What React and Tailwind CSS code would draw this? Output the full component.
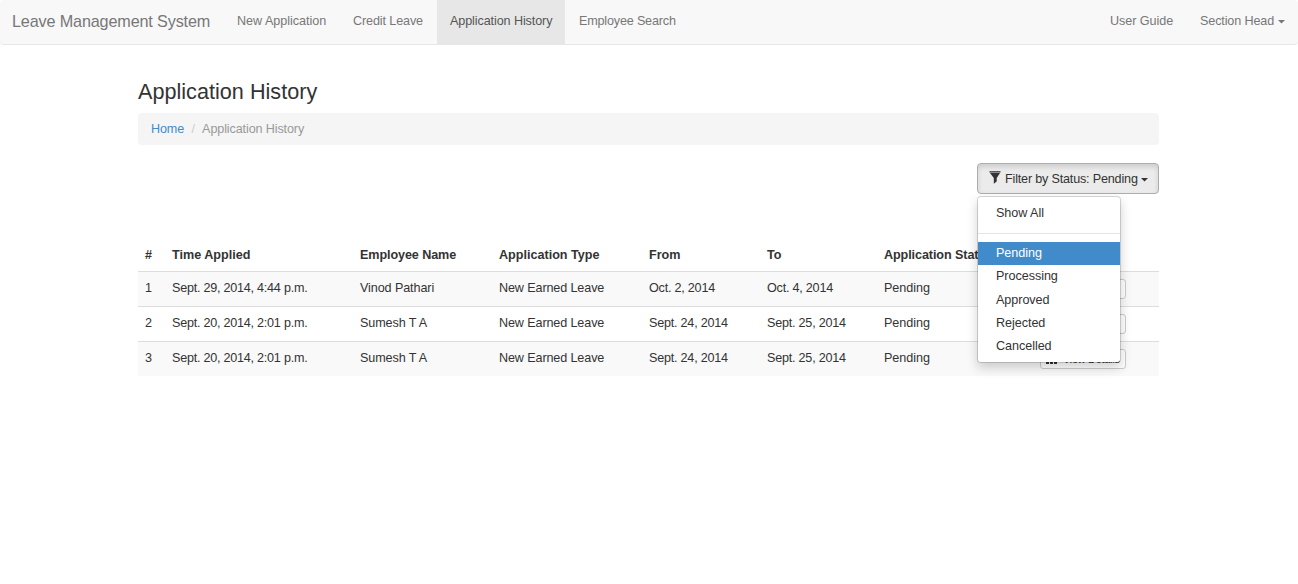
const rows = [
  ['1', 'Sept. 29, 2014, 4:44 p.m.', 'Vinod Pathari', 'New Earned Leave', 'Oct. 2, 2014', 'Oct. 4, 2014', 'Pending'],
  ['2', 'Sept. 20, 2014, 2:01 p.m.', 'Sumesh T A', 'New Earned Leave', 'Sept. 24, 2014', 'Sept. 25, 2014', 'Pending'],
  ['3', 'Sept. 20, 2014, 2:01 p.m.', 'Sumesh T A', 'New Earned Leave', 'Sept. 24, 2014', 'Sept. 25, 2014', 'Pending'],
];
const cellTracking = [
  '',
  'tracking-[-0.24px]',
  'tracking-[-0.1px]',
  'tracking-[-0.12px]',
  'tracking-[-0.22px]',
  'tracking-[-0.22px]',
  'tracking-[-0.05px]',
];
const headings = ['#', 'Time Applied', 'Employee Name', 'Application Type', 'From', 'To', 'Application Status', ''];
const statuses = ['Pending', 'Processing', 'Approved', 'Rejected', 'Cancelled'];

function Caret({ className }) {
  return (
    <svg className={`shrink-0 ${className}`} width="7" height="4" viewBox="0 0 7 4" fill="currentColor">
      <path d="M0 0h7L3.5 3.5z" />
    </svg>
  );
}

function FilterIcon() {
  return (
    <svg className="mr-[4px] -mt-[2px] shrink-0" width="12" height="13" viewBox="0 0 12 13" fill="currentColor">
      <path d="M.5 0h11v1H.5z" opacity=".8" />
      <path d="M.5 1h11v1H.5z" opacity=".5" />
      <path d="M1 2h10L7.7 7v3.5L4.8 12.7V7z" />
    </svg>
  );
}

function StatsIcon() {
  return (
    <svg className="mr-[6px] -mt-[2px] shrink-0" width="11" height="11" viewBox="0 0 11 11" fill="currentColor">
      <path d="M0 7h3v4H0zM4 4h3v7H4zM8 0h3v11H8z" />
    </svg>
  );
}

function NavLink({ children, active, className = '' }) {
  return (
    <a className={`flex h-[44px] items-center px-[13px] pb-[3px] ${active ? 'bg-[#e7e7e7] text-[#555]' : 'text-[#777]'} ${className}`}>
      {children}
    </a>
  );
}

function StatusFilter() {
  return (
    <div className="relative">
      <button className="flex h-[31px] w-[182px] items-center rounded-[4px] border border-[#adadad] bg-[#ebebeb] pl-[11px] tracking-[-0.18px] whitespace-nowrap shadow-[inset_0_3px_5px_rgba(0,0,0,0.125)]">
        <FilterIcon />
        Filter by Status: Pending
        <Caret className="mt-[2px] ml-[3px]" />
      </button>
      <ul className="absolute top-[33px] left-0 z-10 w-[144px] rounded-[4px] border border-black/15 bg-white bg-clip-padding pt-[4px] pb-[4px] tracking-[-0.05px] shadow-[0_5px_11px_rgba(0,0,0,0.175)]">
        <li className="flex h-[23px] items-center px-[18px]">Show All</li>
        <li className="mt-[9px] mb-[8px] h-px bg-[#e5e5e5]" />
        {statuses.map((s) => (
          <li
            key={s}
            className={`flex h-[23.2px] items-center px-[18px] ${s === 'Pending' ? 'bg-[#428bca] pb-px text-white' : s === 'Processing' ? 'pb-[2px]' : ''}`}
          >
            {s}
          </li>
        ))}
      </ul>
    </div>
  );
}

export default function App() {
  return (
    <div className="min-h-screen bg-white font-['Liberation_Sans',Arial,sans-serif] text-[12.6px] leading-[18px] text-[#333]">
      <nav className="flex h-[45px] rounded-[4px] border-b border-[#e7e7e7] bg-[#f8f8f8] whitespace-nowrap">
        <a className="flex h-[44px] w-[224px] items-center pb-[2px] pl-[12px] text-[16.2px] tracking-[-0.15px] text-[#777]">Leave Management System</a>
        <NavLink className="w-[116px] tracking-[-0.03px]">New Application</NavLink>
        <NavLink className="w-[97px] tracking-[-0.12px]">Credit Leave</NavLink>
        <NavLink active className="w-[128px] tracking-[-0.1px]">Application History</NavLink>
        <NavLink className="pl-[14px] tracking-[-0.18px]">Employee Search</NavLink>
        <div className="ml-auto flex">
          <NavLink className="w-[90px] tracking-[-0.05px]">User Guide</NavLink>
          <NavLink className="w-[111px] tracking-[-0.13px]">
            Section Head
            <Caret className="mt-[3px] ml-[4px]" />
          </NavLink>
        </div>
      </nav>
      <main className="ml-[138px] w-[1021px] pt-[34px]">
        <h3 className="h-[34px] text-[21.6px] leading-[26px] tracking-[0.02px]">Application History</h3>
        <div className="flex h-[32px] items-center rounded-[4px] bg-[#f5f5f5] px-[13px] tracking-[-0.12px] text-[#999]">
          <a className="text-[#428bca]">Home</a>
          <span className="px-[7.3px] text-[#ccc]">/</span>
          <span>Application History</span>
        </div>
        <div className="mt-[18px] flex justify-end">
          <StatusFilter />
        </div>
        <table className="mt-[44px] w-full table-fixed border-separate border-spacing-0 text-left">
          <colgroup>
            <col className="w-[27px]" />
            <col className="w-[188px]" />
            <col className="w-[139px]" />
            <col className="w-[150px]" />
            <col className="w-[118px]" />
            <col className="w-[117px]" />
            <col className="w-[156px]" />
            <col className="w-[126px]" />
          </colgroup>
          <thead>
            <tr>
              {headings.map((h) => (
                <th key={h} className={`h-[34px] border-b border-[#ddd] px-[7px] pt-px font-bold whitespace-nowrap ${h === 'Employee Name' || h === 'Application Status' ? 'tracking-[-0.09px]' : ''}`}>{h}</th>
              ))}
            </tr>
          </thead>
          <tbody className="[&>tr:nth-child(odd)]:bg-[#f9f9f9] [&>tr:not(:last-child)>td]:border-b [&>tr:last-child>td]:h-[34px]">
            {rows.map((row) => (
              <tr key={row[0]}>
                {row.map((cell, i) => (
                  <td key={i} className={`h-[35px] border-[#ddd] px-[7px] pt-[7px] align-top whitespace-nowrap ${cellTracking[i]}`}>{cell}</td>
                ))}
                <td className="h-[35px] border-[#ddd] px-[7px] pt-[7px] align-top">
                  <button className="flex h-[20px] w-[86px] items-center rounded-[3px] border border-[#ccc] bg-white pl-[5px] text-[10.8px] leading-[16px] tracking-[-0.22px] whitespace-nowrap">
                    <StatsIcon />
                    View Details
                  </button>
                </td>
              </tr>
            ))}
          </tbody>
        </table>
      </main>
    </div>
  );
}
